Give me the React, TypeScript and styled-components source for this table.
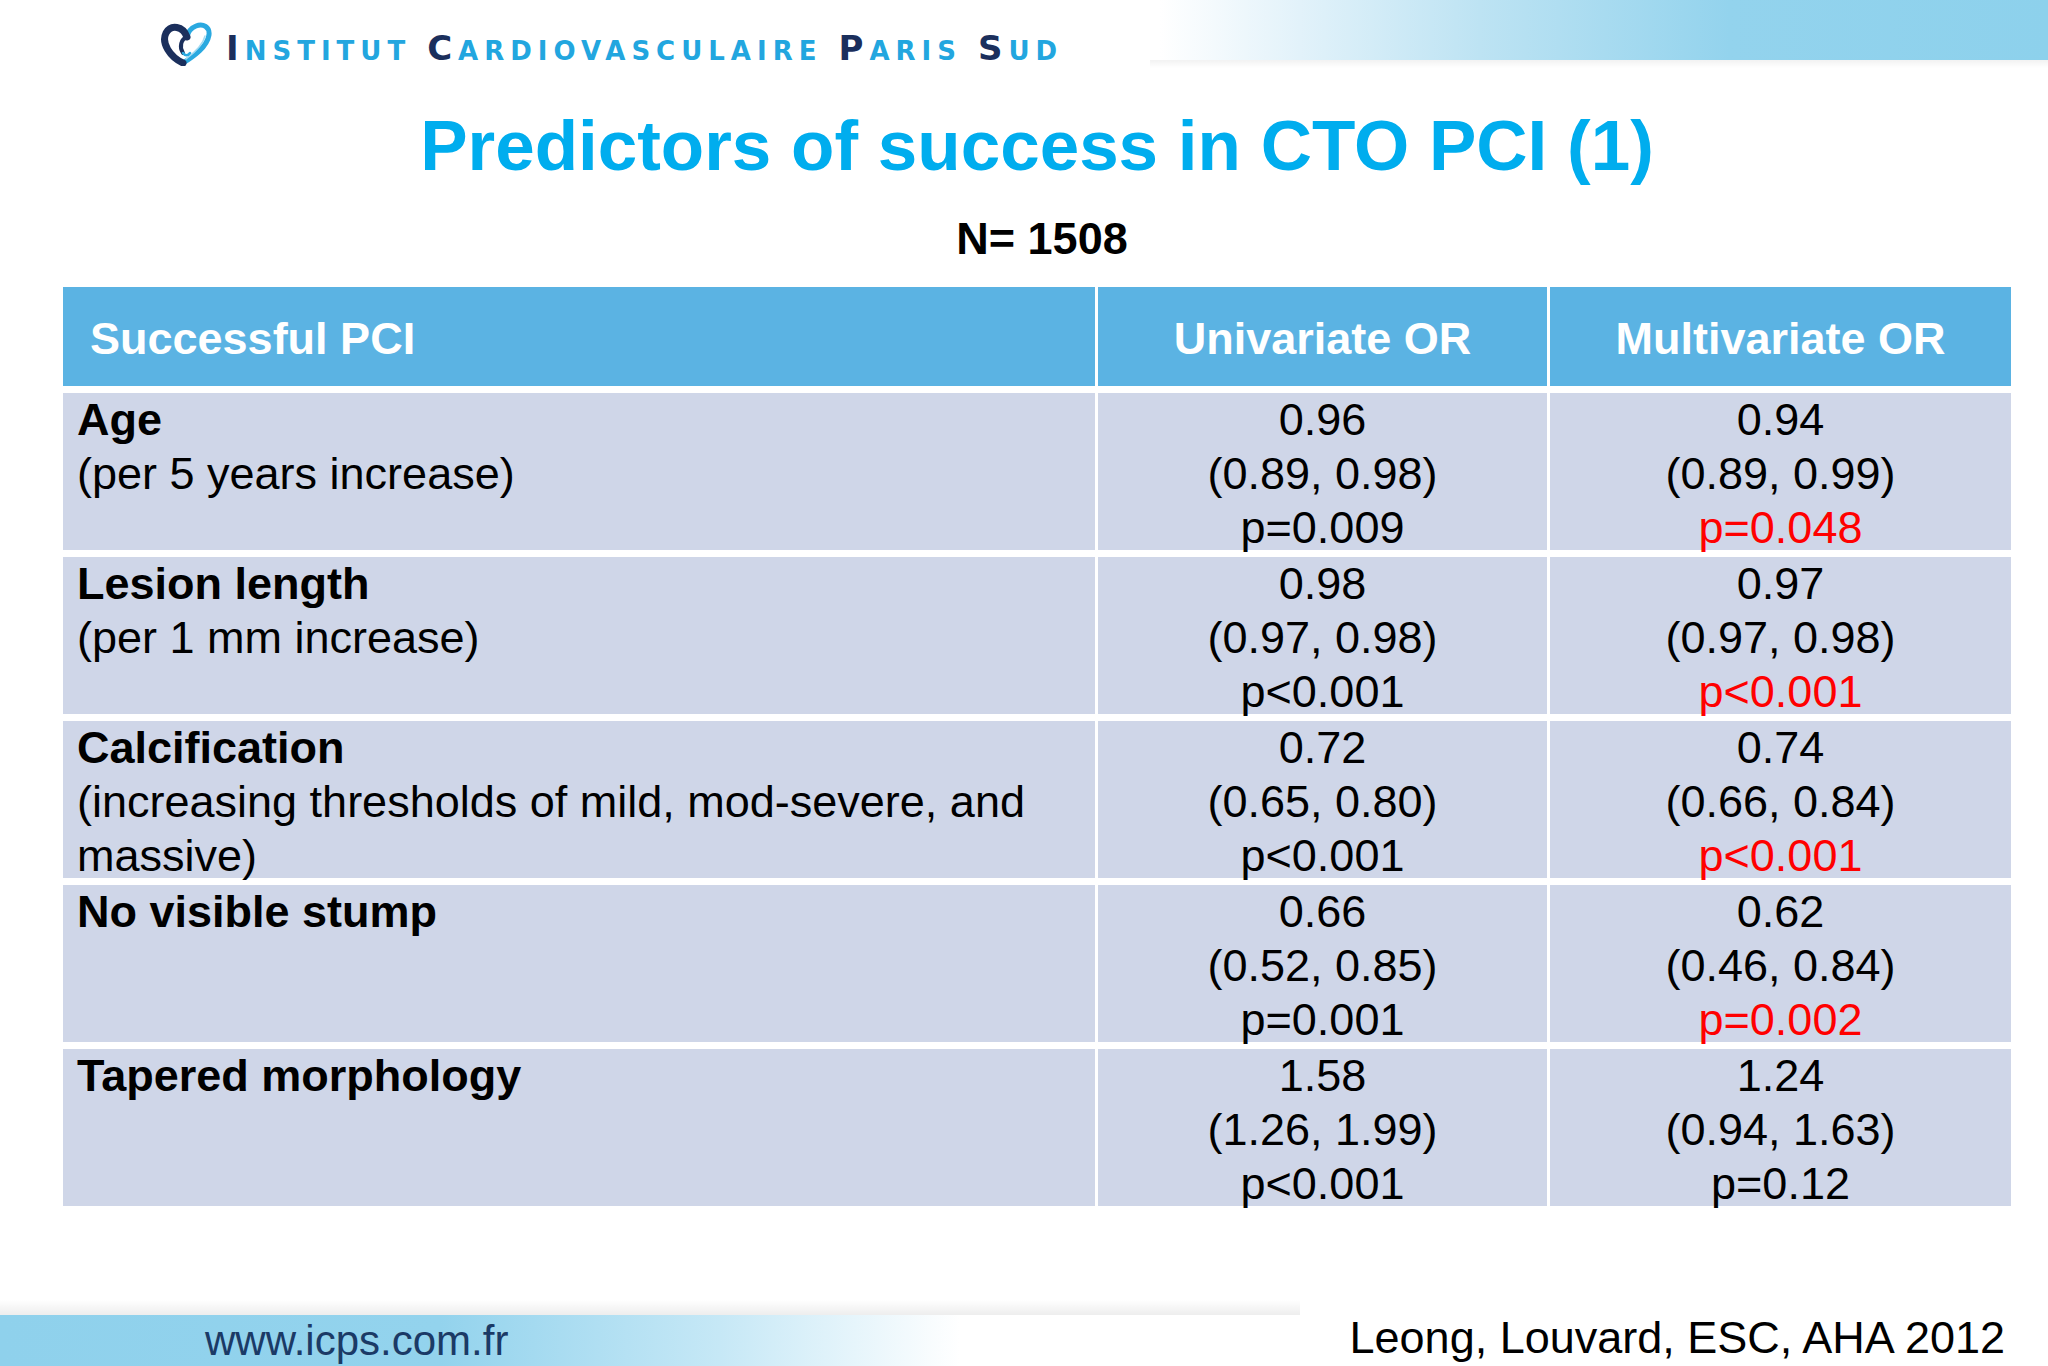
import React from "react";
import styled, { createGlobalStyle } from "styled-components";

const GlobalStyle = createGlobalStyle`
  html, body {
    margin: 0;
    padding: 0;
    background: #ffffff;
  }
  body {
    font-family: "Liberation Sans", Arial, sans-serif;
  }
`;

type Row = {
  label: string;
  sub?: string;
  uni: string[];
  multi: string[];
  sig: boolean;
};

const rows: Row[] = [
  {
    label: "Age",
    sub: "(per 5 years increase)",
    uni: ["0.96", "(0.89, 0.98)", "p=0.009"],
    multi: ["0.94", "(0.89, 0.99)", "p=0.048"],
    sig: true,
  },
  {
    label: "Lesion length",
    sub: "(per 1 mm increase)",
    uni: ["0.98", "(0.97, 0.98)", "p<0.001"],
    multi: ["0.97", "(0.97, 0.98)", "p<0.001"],
    sig: true,
  },
  {
    label: "Calcification",
    sub: "(increasing thresholds of mild, mod-severe, and massive)",
    uni: ["0.72", "(0.65, 0.80)", "p<0.001"],
    multi: ["0.74", "(0.66, 0.84)", "p<0.001"],
    sig: true,
  },
  {
    label: "No visible stump",
    uni: ["0.66", "(0.52, 0.85)", "p=0.001"],
    multi: ["0.62", "(0.46, 0.84)", "p=0.002"],
    sig: true,
  },
  {
    label: "Tapered morphology",
    uni: ["1.58", "(1.26, 1.99)", "p<0.001"],
    multi: ["1.24", "(0.94, 1.63)", "p=0.12"],
    sig: false,
  },
];

const brandWords = ["Institut", "Cardiovasculaire", "Paris", "Sud"];

export default function App() {
  return (
    <>
      <GlobalStyle />
      <Page>
        <Header>
          <Logo>
            <HeartMark />
            <Brand>
              {brandWords.map((w) => (
                <Word key={w}>
                  <Initial>{w[0]}</Initial>
                  <Rest>{w.slice(1)}</Rest>
                </Word>
              ))}
            </Brand>
          </Logo>
        </Header>

        <Title>Predictors of success in CTO PCI (1)</Title>
        <Count>N= 1508</Count>

        <Table>
          <HeadCell>Successful PCI</HeadCell>
          <HeadCell $center>Univariate OR</HeadCell>
          <HeadCell $center>Multivariate OR</HeadCell>
          {rows.map((r) => (
            <React.Fragment key={r.label}>
              <LabelCell>
                <strong>{r.label}</strong>
                {r.sub && <div>{r.sub}</div>}
              </LabelCell>
              <ValueCell>
                {r.uni.map((v) => (
                  <div key={v}>{v}</div>
                ))}
              </ValueCell>
              <ValueCell>
                <div>{r.multi[0]}</div>
                <div>{r.multi[1]}</div>
                <PValue $sig={r.sig}>{r.multi[2]}</PValue>
              </ValueCell>
            </React.Fragment>
          ))}
        </Table>

        <Footer>
          <Url>www.icps.com.fr</Url>
          <Citation>Leong, Louvard, ESC, AHA 2012</Citation>
        </Footer>
      </Page>
    </>
  );
}

function HeartMark() {
  return (
    <svg width="52" height="44" viewBox="0 0 52 44">
      <path
        d="M23 41 C 34 34, 47 25, 49 13 C 50 5, 43 1, 36 4 C 31 6, 28 10, 27 15"
        fill="none"
        stroke="#2aa9e0"
        strokeWidth="5"
        strokeLinecap="round"
      />
      <path
        d="M26 37 C 34 31, 43 23, 45 14"
        fill="none"
        stroke="#a5dbf2"
        strokeWidth="1.5"
        strokeLinecap="round"
      />
      <path
        d="M27 15 C 23 4, 11 2, 6 11 C 1 21, 10 35, 23 41"
        fill="none"
        stroke="#1b2f5c"
        strokeWidth="7"
        strokeLinecap="round"
      />
      <path
        d="M27 15 C 21 17, 19 25, 23 31"
        fill="none"
        stroke="#1b2f5c"
        strokeWidth="4"
        strokeLinecap="round"
      />
      <path
        d="M23 31 C 25 34, 28 34, 30 31"
        fill="none"
        stroke="#2aa9e0"
        strokeWidth="2.5"
        strokeLinecap="round"
      />
    </svg>
  );
}

const Page = styled.div`
  width: 2048px;
  height: 1366px;
  display: flex;
  flex-direction: column;
  overflow: hidden;
  background: #ffffff;
`;

const Header = styled.header`
  height: 70px;
  box-sizing: border-box;
  padding: 22px 0 0 160px;
  display: flex;
  align-items: flex-start;
  background:
    linear-gradient(to bottom, rgba(0, 0, 0, 0.05), rgba(0, 0, 0, 0)) 1150px 60px / 898px 8px no-repeat,
    linear-gradient(
        to right,
        #ffffff 0,
        #ffffff 1160px,
        #e2f2fa 1300px,
        #bde3f3 1480px,
        #93d3ed 1730px,
        #8dd1ec 100%
      )
      0 0 / 100% 60px no-repeat;
`;

const Logo = styled.div`
  display: flex;
  align-items: center;
  gap: 14px;
  height: 44px;
`;

const Brand = styled.span`
  display: flex;
  align-items: baseline;
  gap: 16px;
  padding-top: 14px;
  font-family: "DejaVu Sans", sans-serif;
  font-weight: bold;
  line-height: 34px;
  letter-spacing: 6px;
  text-transform: uppercase;
  white-space: nowrap;
`;

const Word = styled.span`
  display: inline-block;
`;

const Initial = styled.span`
  font-size: 34px;
  color: #1b2f5c;
`;

const Rest = styled.span`
  font-size: 26px;
  color: #22a6df;
`;

const Title = styled.h1`
  margin: 36px 0 0;
  padding-left: 26px;
  font-size: 71px;
  line-height: 80px;
  font-weight: bold;
  color: #00adee;
  text-align: center;
`;

const Count = styled.div`
  margin-top: 26px;
  padding-left: 36px;
  font-size: 45px;
  line-height: 54px;
  font-weight: bold;
  color: #000000;
  text-align: center;
`;

const Table = styled.div`
  margin: 21px 0 0 63px;
  width: 1948px;
  display: grid;
  grid-template-columns: 1032px 449px 461px;
  grid-template-rows: 99px repeat(5, 157px);
  column-gap: 3px;
  row-gap: 7px;
`;

const HeadCell = styled.div<{ $center?: boolean }>`
  background: #5bb3e3;
  color: #ffffff;
  font-size: 45px;
  font-weight: bold;
  display: flex;
  align-items: center;
  justify-content: ${(p) => (p.$center ? "center" : "flex-start")};
  padding-left: ${(p) => (p.$center ? "0" : "27px")};
  padding-top: 4px;
  box-sizing: border-box;
`;

const BodyCell = styled.div`
  background: #cfd6e8;
  color: #000000;
  font-size: 45px;
  line-height: 54px;
  min-width: 0;
`;

const LabelCell = styled(BodyCell)`
  padding: 0 12px 0 14px;
  strong {
    display: block;
    font-weight: bold;
  }
`;

const ValueCell = styled(BodyCell)`
  text-align: center;
`;

const PValue = styled.div<{ $sig: boolean }>`
  color: ${(p) => (p.$sig ? "#ff0000" : "#000000")};
`;

const Footer = styled.footer`
  margin-top: auto;
  height: 66px;
  box-sizing: border-box;
  padding: 15px 43px 0 205px;
  display: flex;
  align-items: center;
  justify-content: space-between;
  background:
    linear-gradient(
        to right,
        #8fd1ec 0,
        #93d3ed 440px,
        #c6e8f6 720px,
        #ffffff 960px
      )
      0 15px / 100% 51px no-repeat,
    linear-gradient(to bottom, rgba(0, 0, 0, 0), rgba(0, 0, 0, 0.07)) 0 0 / 1300px 15px no-repeat;
`;

const Url = styled.span`
  font-size: 42px;
  line-height: 51px;
  color: #1b3a66;
`;

const Citation = styled.span`
  font-size: 45px;
  line-height: 51px;
  color: #000000;
  margin-top: -6px;
`;
